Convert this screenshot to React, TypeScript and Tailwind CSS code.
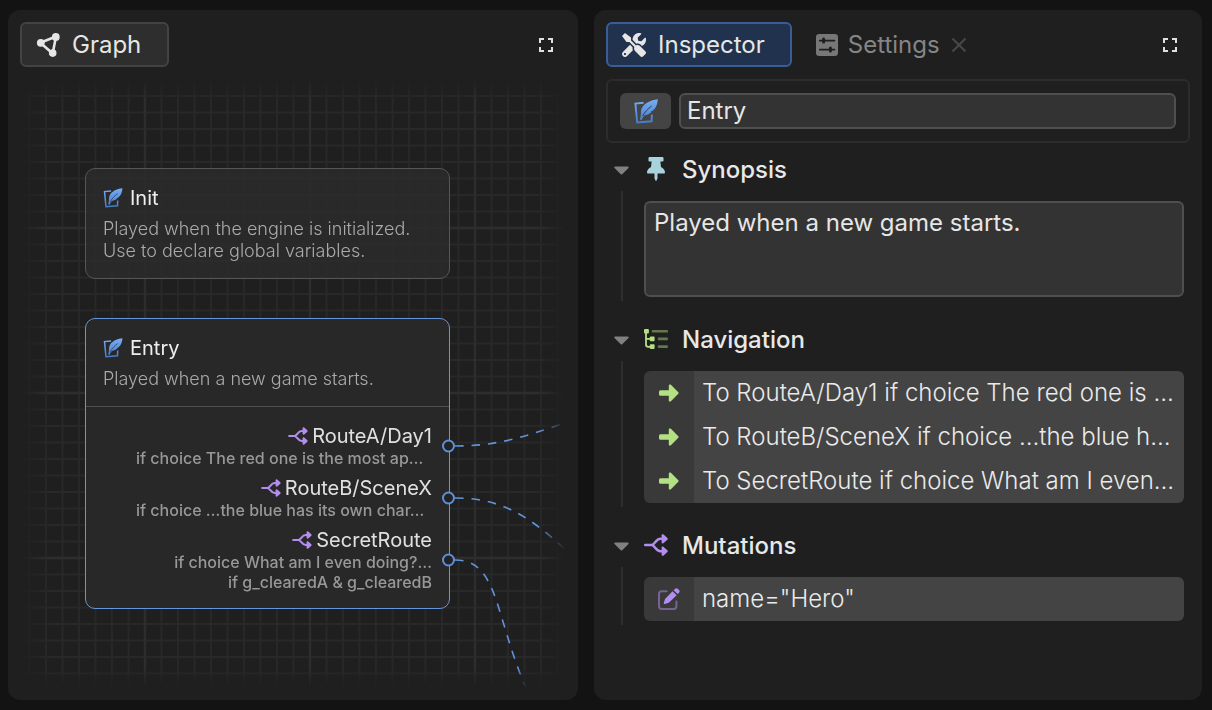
import { useId, useState, type ReactNode } from "react";
import { FaCaretDown, FaThumbtack, FaTools } from "react-icons/fa";

type IconProps = { className?: string };

function GraphIcon({ className }: IconProps) {
  return (
    <svg viewBox="0 0 24 24" className={className} fill="currentColor" aria-hidden="true">
      <path d="M4.3 9.7 20 3.5 16.7 20.6Z" fill="none" stroke="currentColor" strokeWidth="2.6" strokeLinejoin="round" />
      <circle cx="4.8" cy="9.8" r="3.9" />
      <circle cx="19.8" cy="3.9" r="3.9" />
      <circle cx="16.7" cy="20.1" r="3.8" />
    </svg>
  );
}

function QuillIcon({ className }: IconProps) {
  const id = useId();
  return (
    <svg viewBox="0 0 24 25" className={className} aria-hidden="true">
      <defs>
        <linearGradient id={id} x1="0" y1="0" x2="0" y2="25" gradientUnits="userSpaceOnUse">
          <stop offset="0" stopColor="#77aef8" />
          <stop offset="1" stopColor="#4479c4" />
        </linearGradient>
      </defs>
      <path d="M9.6 3.7 1.4 4.5 3.2 23.4 17.6 22.3 17.9 15.6" fill="none" stroke={`url(#${id})`} strokeWidth="1.9" />
      <path
        d="M23.8.3C16.6 1 9.8 4.4 7.6 9.6 6.4 12.8 7.6 15.6 5.9 20.6L7.5 21.2C8.5 18.8 9.4 17.4 10.6 16.2 13 16 15.6 14.8 17.6 12.9L16.6 12.6C18.6 12 20.2 10.6 21.4 8.7 22.9 6.2 23.7 3.4 23.8.3Z"
        fill={`url(#${id})`}
      />
      <path d="M17.4 7.2C13.6 10 10.8 13.2 8.7 16.8" fill="none" stroke="#2b3442" strokeWidth=".9" strokeLinecap="round" />
    </svg>
  );
}

function BranchIcon({ className }: IconProps) {
  return (
    <svg viewBox="0 0 24 22" className={className} fill="currentColor" aria-hidden="true">
      <path
        d="M1.2 11H7.5C11 11 11.6 4.8 16.4 4.8H19M7.5 11C11 11 11.6 17.2 16.4 17.2H19"
        fill="none"
        stroke="currentColor"
        strokeWidth="2.5"
        strokeLinecap="round"
      />
      <path d="M17.6 1.2C17.6.3 18.8-.1 19.6.5L23.4 3.9C23.9 4.5 23.9 5.2 23.4 5.7L19.6 9.1C18.8 9.7 17.6 9.3 17.6 8.4Z" />
      <path d="M17.6 13.6C17.6 12.7 18.8 12.3 19.6 12.9L23.4 16.3C23.9 16.9 23.9 17.6 23.4 18.1L19.6 21.5C18.8 22.1 17.6 21.7 17.6 20.8Z" />
    </svg>
  );
}

function TreeIcon({ className }: IconProps) {
  return (
    <svg viewBox="0 0 24 20" className={className} fill="currentColor" aria-hidden="true">
      <path d="M2 3V15.5Q2 17.8 4.3 17.8H7M2 9.8H7" fill="none" stroke="currentColor" strokeWidth="1.8" />
      <rect x="0" y="0" width="4.9" height="4.6" rx="1" />
      <rect x="5.8" y="7.5" width="4.8" height="4.7" rx="1" />
      <rect x="5.8" y="15.3" width="4.8" height="4.7" rx="1" />
      <g opacity=".46">
        <rect x="7.7" y="1" width="16.3" height="2.6" rx="1.2" />
        <rect x="13.7" y="8.6" width="10.3" height="2.6" rx="1.2" />
        <rect x="13.7" y="16.3" width="10.3" height="2.6" rx="1.2" />
      </g>
    </svg>
  );
}

function ArrowIcon({ className }: IconProps) {
  return (
    <svg viewBox="0 0 20 18" className={className} fill="currentColor" aria-hidden="true">
      <path d="M1.6 6.2H9.8V1.6C9.8.4 11.1 0 11.9.8L19.3 8.2C19.7 8.6 19.7 9.4 19.3 9.8L11.9 17.2C11.1 18 9.8 17.6 9.8 16.4V11.8H1.6Q0 11.8 0 10.2V7.8Q0 6.2 1.6 6.2Z" />
    </svg>
  );
}

function PencilSquareIcon({ className }: IconProps) {
  return (
    <svg viewBox="0 0 22 22" className={className} fill="currentColor" aria-hidden="true">
      <path
        d="M8.7 3.3H3.8Q1 3.3 1 6V18.3Q1 21 3.8 21H15.7Q18.4 21 18.4 18.3V13.6"
        fill="none"
        stroke="currentColor"
        strokeWidth="2"
        strokeLinecap="round"
        opacity=".5"
      />
      <path d="M14.6 3.2 18.6 7.2 11.4 14.3Q10.8 14.9 10 15.1L6.7 15.9Q5.6 16.1 5.8 15L6.7 11.9Q6.9 11.1 7.5 10.4Z" />
      <path d="M15.7 2.2 17.2.8Q18.6-.4 20 .9L21 1.9Q22.3 3.3 21 4.7L19.6 6.1Z" />
    </svg>
  );
}

function SlidersIcon({ className }: IconProps) {
  return (
    <svg viewBox="0 0 22 22" className={className} aria-hidden="true">
      <rect width="22" height="22" rx="3.2" fill="currentColor" />
      <path d="M3.8 6.6H18.4M3.8 15.6H18.4" stroke="#1f1f1f" strokeWidth="1.8" strokeLinecap="round" />
      <path d="M7.6 5.1V8.1M14.4 14.1V17.1" stroke="#1f1f1f" strokeWidth="3" strokeLinecap="round" />
    </svg>
  );
}

function ExpandButton({ label }: { label: string }) {
  return (
    <button type="button" aria-label={label} className="ml-auto flex size-8 items-center justify-center text-[#e0e0e0]">
      <svg viewBox="0 0 14 14" className="size-[14px]" fill="none" stroke="currentColor" strokeWidth="2" aria-hidden="true">
        <path d="M1 5V1H5M9 1H13V5M13 9V13H9M5 13H1V9" />
      </svg>
    </button>
  );
}

const routes = [
  { target: "RouteA/Day1", conditions: ["if choice The red one is the most ap…"], clipped: true },
  { target: "RouteB/SceneX", conditions: ["if choice …the blue has its own char…"], clipped: true },
  { target: "SecretRoute", conditions: ["if choice What am I even doing?…", "if g_clearedA & g_clearedB"], clipped: false },
];

const links = [
  "To RouteA/Day1 if choice The red one is …",
  "To RouteB/SceneX if choice …the blue h…",
  "To SecretRoute if choice What am I even…",
];

function NodeHeader({ title, children }: { title: string; children: ReactNode }) {
  return (
    <div className="px-[17px] pt-[15px]">
      <h3 className="flex h-7 items-center gap-[7px] text-[20px] text-[#eeeeee]">
        <QuillIcon className="h-5 w-5" />
        {title}
      </h3>
      <p className="mt-[6px] text-[18px] font-light leading-[22px] text-[#aaaaaa]">{children}</p>
    </div>
  );
}

function GraphCanvas() {
  return (
    <div className="relative flex-1 overflow-hidden [mask-image:linear-gradient(to_right,transparent,black_28px,black_calc(100%-28px),transparent),linear-gradient(to_bottom,transparent,black_20px,black_calc(100%-20px),transparent)] [mask-composite:intersect]">
      <svg className="absolute inset-0 size-full" aria-hidden="true">
        <defs>
          <pattern id="cells" x="-40" y="-16" width="165" height="165" patternUnits="userSpaceOnUse">
            <path
              d="M16.5 0V165M33 0V165M49.5 0V165M66 0V165M82.5 0V165M99 0V165M115.5 0V165M132 0V165M148.5 0V165M0 16.5H165M0 33H165M0 49.5H165M0 66H165M0 82.5H165M0 99H165M0 115.5H165M0 132H165M0 148.5H165"
              stroke="#282828"
              strokeWidth="1.9"
            />
            <path d="M0 0V165M165 0V165M0 0H165M0 165H165" stroke="#2d2d2d" strokeWidth="2.4" />
          </pattern>
        </defs>
        <rect width="100%" height="100%" fill="url(#cells)" />
        <g fill="none" stroke="#6292d8" strokeWidth="1.6" strokeDasharray="8.5 8">
          <path d="M435 367C476 367 502 359 550 342" />
          <path d="M435 419C478 419 508 434 552 477" />
          <path d="M435 481C480 481 474 540 510 618" />
        </g>
      </svg>

      <article className="absolute left-[65px] top-[89px] h-[111px] w-[365px] rounded-[10px] border border-[#565656] bg-[#2b2b2b]/85">
        <NodeHeader title="Init">
          Played when the engine is initialized.
          <br />
          Use to declare global variables.
        </NodeHeader>
      </article>

      <article className="absolute left-[65px] top-[239px] w-[365px] rounded-[10px] border border-[#6595dc] bg-[#282828]">
        <NodeHeader title="Entry">Played when a new game starts.</NodeHeader>
        <ul className="mt-4 flex flex-col gap-2 border-t border-[#505050] px-[17px] pb-4 pt-[17px]">
          {routes.map((route) => (
            <li key={route.target} className="relative flex flex-col items-end">
              <div className="flex h-6 items-center gap-1 text-[20px] text-[#e0e0e0]">
                <BranchIcon className="h-[18px] w-5 text-[#b48eee]" />
                {route.target}
              </div>
              {route.conditions.map((condition) => (
                <div
                  key={condition}
                  className={
                    route.clipped
                      ? "w-[296px] whitespace-nowrap text-left text-[16px] font-medium leading-5 text-[#989898]"
                      : "whitespace-nowrap text-[16px] font-medium leading-5 text-[#989898]"
                  }
                >
                  {condition}
                </div>
              ))}
              <span className="absolute -right-[23px] top-1/2 size-[13px] -translate-y-1/2 rounded-full border-2 border-[#5f8fd6] bg-[#222222]" />
            </li>
          ))}
        </ul>
      </article>
    </div>
  );
}

function Section({ title, icon, children }: { title: string; icon: ReactNode; children: ReactNode }) {
  const [open, setOpen] = useState(true);
  return (
    <section>
      <h2>
        <button
          type="button"
          aria-expanded={open}
          onClick={() => setOpen(!open)}
          className="flex h-[42px] w-full items-center text-[24px] font-medium text-[#e8e8e8]"
        >
          <span className="flex w-[38px] pb-[2px] pl-[3px]">
            <FaCaretDown className={open ? "size-[25px] text-[#808080]" : "size-[25px] -rotate-90 text-[#808080]"} />
          </span>
          <span className="mr-[14px] flex w-6 justify-center pb-[2px]">{icon}</span>
          {title}
        </button>
      </h2>
      {open && <div className="ml-[15px] border-l-2 border-[#2e2e2e] pb-1 pl-[21px] pr-[6px] pt-[10px]">{children}</div>}
    </section>
  );
}

function LinkRow({ icon, text }: { icon: ReactNode; text: string }) {
  return (
    <button type="button" className="flex h-11 w-full text-left text-[24px] font-light text-[#eaeaea]">
      <span className="flex w-[50px] shrink-0 items-center justify-center self-stretch bg-[#393939]">{icon}</span>
      <span className="min-w-0 flex-1 self-stretch overflow-hidden whitespace-nowrap bg-[#444444] pl-2 leading-[43px]">{text}</span>
    </button>
  );
}

export default function App() {
  return (
    <main className="grid min-h-screen grid-cols-[minmax(0,570fr)_minmax(0,608fr)] gap-4 bg-[#131313] py-[10px] pl-2 pr-[10px] font-['Inter',sans-serif] text-[#e6e6e6]">
      <section className="flex flex-col rounded-xl bg-[#1f1f1f] p-3" aria-label="Graph">
        <header className="mb-3 flex h-[45px] items-center pr-1">
          <button
            type="button"
            className="flex h-full items-center gap-3 rounded-md border-2 border-[#434343] bg-[#2e2e2e] pl-[14px] pr-[26px] text-[24px]"
          >
            <GraphIcon className="size-6" />
            Graph
          </button>
          <ExpandButton label="Maximize graph" />
        </header>
        <GraphCanvas />
      </section>

      <section className="rounded-xl bg-[#1f1f1f] p-3" aria-label="Inspector">
        <header className="mb-3 flex h-[45px] items-center pr-1">
          <button
            type="button"
            className="flex h-full items-center gap-3 rounded-md border-2 border-[#385d97] bg-[#20324d] pl-[14px] pr-[25px] text-[24px]"
          >
            <FaTools className="size-6" />
            Inspector
          </button>
          <div className="ml-6 flex items-center gap-[11px] text-[#858585]">
            <button type="button" className="flex items-center gap-[10px] text-[24px]">
              <SlidersIcon className="size-[22px] text-[#777777]" />
              Settings
            </button>
            <button type="button" aria-label="Close settings" className="text-[#484848]">
              <svg viewBox="0 0 16 16" className="size-4" fill="none" stroke="currentColor" strokeWidth="2" aria-hidden="true">
                <path d="M1.5 1.5 14.5 14.5M14.5 1.5 1.5 14.5" />
              </svg>
            </button>
          </div>
          <ExpandButton label="Maximize inspector" />
        </header>

        <div className="mb-[6px] flex gap-2 rounded-md border-2 border-[#2c2c2c] p-3">
          <button type="button" aria-label="Script" className="flex h-9 w-[51px] items-center justify-center rounded-md bg-[#444444]">
            <QuillIcon className="h-[25px] w-6" />
          </button>
          <input
            aria-label="Name"
            defaultValue="Entry"
            className="h-9 min-w-0 flex-1 rounded-md border-2 border-[#4f4f4f] bg-[#333333] px-[6px] pb-px text-[24px] outline-none"
          />
        </div>

        <div className="flex flex-col gap-[18px]">
          <Section title="Synopsis" icon={<FaThumbtack className="size-6 text-[#a9d3dc]" />}>
            <textarea
              aria-label="Synopsis"
              defaultValue="Played when a new game starts."
              className="block h-24 w-full resize-none rounded-md border-2 border-[#4f4f4f] bg-[#333333] px-2 py-1 text-[24px] leading-8 outline-none"
            />
          </Section>
          <Section title="Navigation" icon={<TreeIcon className="h-5 w-6 text-[#b4e084]" />}>
            <div className="overflow-hidden rounded-md">
              {links.map((text) => (
                <LinkRow key={text} text={text} icon={<ArrowIcon className="h-[18px] w-5 text-[#b4e084]" />} />
              ))}
            </div>
          </Section>
          <Section title="Mutations" icon={<BranchIcon className="h-[22px] w-6 text-[#b48eee]" />}>
            <div className="overflow-hidden rounded-md">
              <LinkRow text={'name="Hero"'} icon={<PencilSquareIcon className="size-[22px] text-[#b48eee]" />} />
            </div>
          </Section>
        </div>
      </section>
    </main>
  );
}
